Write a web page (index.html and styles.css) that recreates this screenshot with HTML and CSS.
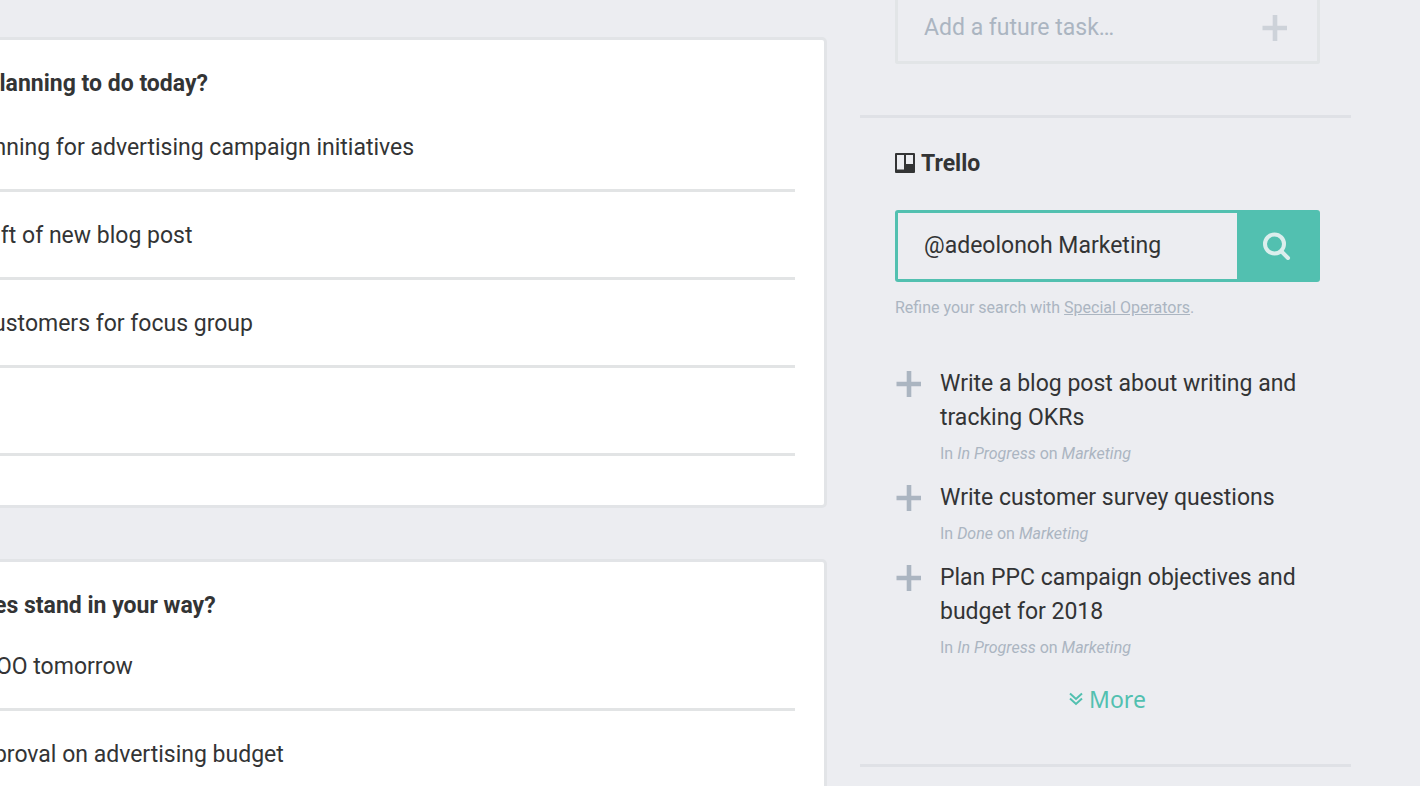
FILE: index.html
```html
<!DOCTYPE html>
<html lang="en">

<head>
  <meta charset="UTF-8" />
  <title>Check-in</title>
  <link rel="stylesheet" href="styles.css">
</head>

<body>

  <div class="page">

    <main class="main">
      <section class="card">
        <h2 class="card-title">u planning to do today?</h2>
        <input class="task" type="text" aria-label="Task 1" value="anning for advertising campaign initiatives" />
        <input class="task" type="text" aria-label="Task 2" value="raft of new blog post" />
        <input class="task" type="text" aria-label="Task 3" value="customers for focus group" />
        <input class="task" type="text" aria-label="Task 4" />
      </section>

      <section class="card card-compact">
        <h2 class="card-title">nges stand in your way?</h2>
        <input class="task" type="text" aria-label="Obstacle 1" value="COO tomorrow" />
        <input class="task" type="text" aria-label="Obstacle 2" value="pproval on advertising budget" />
      </section>
    </main>

    <aside class="sidebar">
      <section class="panel">
        <form class="future-form">
          <input type="text" aria-label="Add a future task" placeholder="Add a future task…" />
          <button type="button" class="plus plus-light" aria-label="Add">
            <svg width="26" height="28" viewBox="0 0 26 28"><path d="M10.700 1h4.600v10.700H25v4.600h-9.700V27h-4.600V16.300H.5v-4.600h10.200z" /></svg>
          </button>
        </form>
      </section>

      <section class="panel">
        <h2 class="panel-title">
          <svg width="20" height="22" viewBox="0 0 20 22">
            <path fill-rule="evenodd" d="M1 0h18q1 0 1 1v18q0 1-1 1H1q-1 0-1-1V1q0-1 1-1zM2 2v14.500h7V2zM11 2v9h7V2z" />
          </svg>
          Trello
        </h2>

        <form class="search-form">
          <input type="text" aria-label="Search Trello" value="@adeolonoh Marketing" />
          <button type="button" aria-label="Search">
            <svg width="28" height="28" viewBox="0 0 28 28">
              <circle cx="11.500" cy="12" r="9.500" />
              <path d="M18.500 19.500l6.500 6.500" />
            </svg>
          </button>
        </form>
        <p class="hint">Refine your search with <a href="#">Special Operators</a>.</p>

        <ul class="results">
          <li>
            <button type="button" class="plus" aria-label="Add">
              <svg width="26" height="28" viewBox="0 0 26 28"><path d="M10.700 1h4.600v10.700H25v4.600h-9.700V27h-4.600V16.300H.5v-4.600h10.200z" /></svg>
            </button>
            <div>
              <p class="result-title">Write a blog post about writing and tracking OKRs</p>
              <p class="result-meta">In <em>In Progress</em> on <em>Marketing</em></p>
            </div>
          </li>
          <li>
            <button type="button" class="plus" aria-label="Add">
              <svg width="26" height="28" viewBox="0 0 26 28"><path d="M10.700 1h4.600v10.700H25v4.600h-9.700V27h-4.600V16.300H.5v-4.600h10.200z" /></svg>
            </button>
            <div>
              <p class="result-title">Write customer survey questions</p>
              <p class="result-meta">In <em>Done</em> on <em>Marketing</em></p>
            </div>
          </li>
          <li>
            <button type="button" class="plus" aria-label="Add">
              <svg width="26" height="28" viewBox="0 0 26 28"><path d="M10.700 1h4.600v10.700H25v4.600h-9.700V27h-4.600V16.300H.5v-4.600h10.200z" /></svg>
            </button>
            <div>
              <p class="result-title">Plan PPC campaign objectives and budget for 2018</p>
              <p class="result-meta">In <em>In Progress</em> on <em>Marketing</em></p>
            </div>
          </li>
        </ul>

        <a class="more" href="#">
          <svg width="14" height="14" viewBox="0 0 14 14"><path d="M1 1.500l6 5.500 6-5.500M1 6.500l6 5.500 6-5.500" /></svg>
          More
        </a>
      </section>
    </aside>

  </div>

</body>

</html>
```

FILE: styles.css
```css
* {
  box-sizing: border-box;
}

body {
  font-family: Roboto, sans-serif;
  font-size: 23px;
  line-height: 34px;
  color: #333435;
  background: #ecedf1;
  margin: 0;
  height: 100vh;
  overflow: hidden;
}

h2,
p,
ul {
  margin: 0;
  padding: 0;
}

input,
button {
  font: inherit;
  color: inherit;
  background: none;
  border: none;
  border-radius: 0;
  outline: none;
  margin: 0;
  padding: 0;
}

button {
  cursor: pointer;
}

svg {
  display: block;
}

.page {
  display: grid;
  grid-template-columns: minmax(0, 1fr) 491px;
  gap: 33px;
  padding-right: 69px;
}

/* main column */
.main {
  display: flex;
  flex-direction: column;
  gap: 51px;
  margin-left: -64px;
  padding-top: 37px;
}

.card {
  background: #fff;
  border: 3px solid #e2e4e7;
  border-radius: 5px;
  padding: 27px 29px 49px;
}

.card-title {
  font-size: 23px;
  font-weight: bold;
  margin-bottom: 3px;
}

.card-compact .card-title {
  margin-bottom: 0;
}

.task {
  display: block;
  width: 100%;
  height: 88px;
  padding: 2px 0 0 13px;
  border-bottom: 3px solid #e2e4e5;
}

/* sidebar */
.panel {
  padding: 29px 31px 48px 35px;
  border-bottom: 3px solid #dfe1e6;
}

.panel:first-child {
  padding-top: 0;
  padding-bottom: 51px;
}

.future-form {
  display: flex;
  align-items: center;
  height: 64px;
  padding: 0 29px 6px 26px;
  border: 3px solid #e2e5e7;
  border-top: none;
  border-radius: 0 0 3px 3px;
}

.future-form input {
  flex: 1;
  min-width: 0;
}

.future-form input::placeholder {
  color: #abb5c1;
  opacity: 1;
}

.plus {
  fill: #abb5c1;
}

.plus-light {
  fill: #cdd2d9;
}

.panel-title {
  display: flex;
  align-items: center;
  gap: 6px;
  font-size: 23px;
  font-weight: bold;
  fill: #333435;
  margin-bottom: 29px;
}

.search-form {
  display: flex;
  height: 72px;
  border: 3px solid #52c0b0;
  border-radius: 3px;
  background: #52c0b0;
}

.search-form input {
  flex: 1;
  min-width: 0;
  padding-left: 26px;
  background: #ecedf1;
}

.search-form button {
  display: flex;
  align-items: center;
  justify-content: center;
  width: 80px;
}

.search-form svg {
  fill: none;
  stroke: #dceeed;
  stroke-width: 4;
  stroke-linecap: round;
}

.hint {
  font-size: 16px;
  line-height: 24px;
  color: #abb5c1;
  margin: 14px 0 47px;
}

.hint a {
  color: inherit;
}

.results {
  display: flex;
  flex-direction: column;
  gap: 15px;
  list-style: none;
}

.results li {
  display: flex;
  align-items: flex-start;
  gap: 18px;
}

.results .plus {
  padding: 3px 0 0 1px;
}

.result-meta {
  font-size: 16px;
  line-height: 24px;
  color: #abb5c1;
  margin-top: 7px;
}

.more {
  display: flex;
  align-items: center;
  justify-content: center;
  gap: 6px;
  margin-top: 22px;
  font-family: "Noto Sans", sans-serif;
  color: #52c0b0;
  text-decoration: none;
}

.more svg {
  fill: none;
  stroke: #52c0b0;
  stroke-width: 2;
}
```
